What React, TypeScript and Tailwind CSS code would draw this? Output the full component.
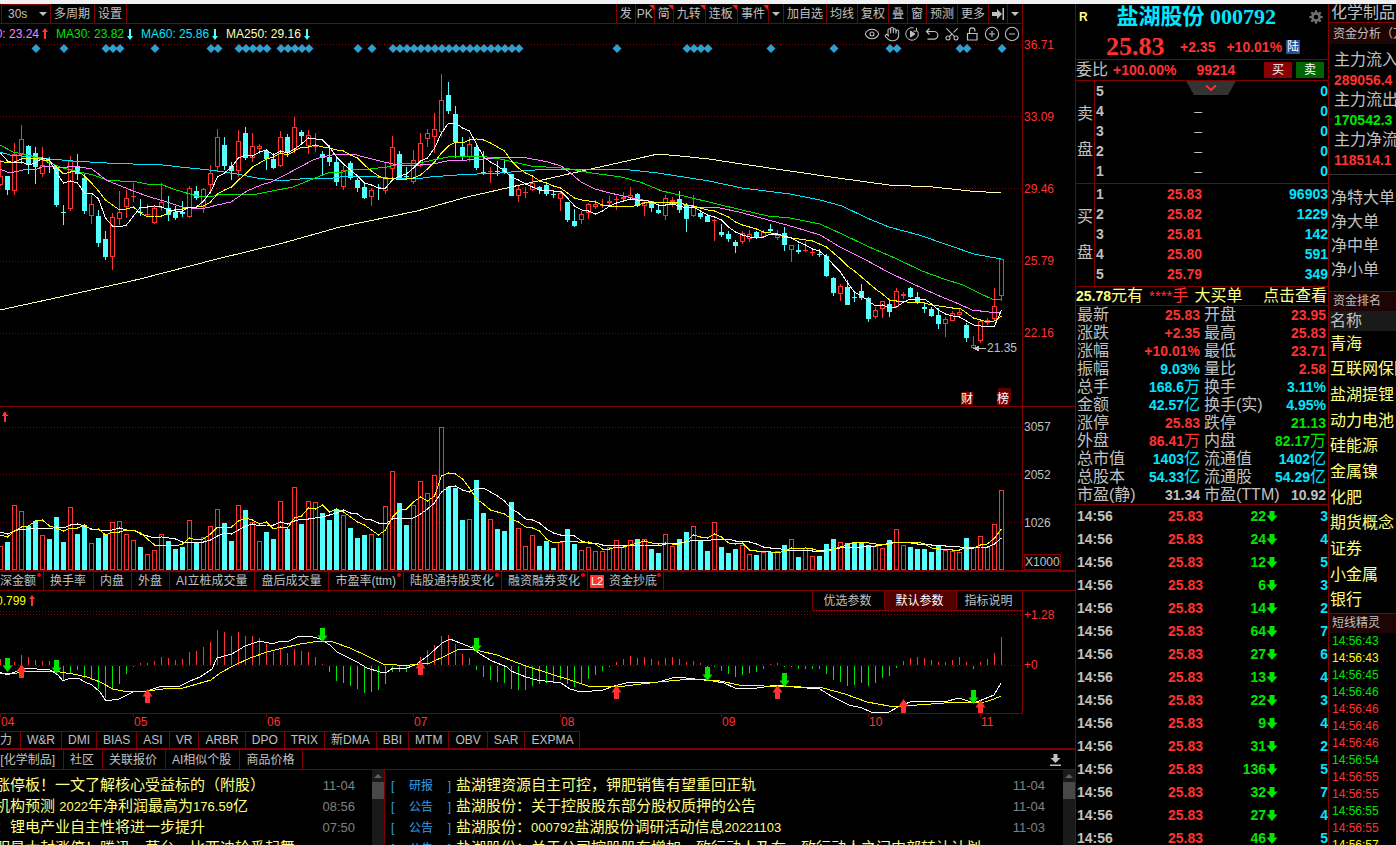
import type { ReactNode } from "react";
import { CircleMinus, CirclePlus, Eye, Hand, Scissors } from "lucide-react";

const RED = "#ff3232";
const CYAN = "#54ffff";
const GREEN = "#00e600";
const LINE = "#800000";

// high, body top, body bottom, low, rising
type Candle = [number, number, number, number, number];

const candles: Candle[] = [
  [160, 176, 185, 186, 1], [176, 176, 190, 195, 0], [143, 154, 191, 195, 1], [125, 139, 155, 164, 1],
  [145, 146, 165, 174, 0], [147, 153, 167, 184, 0], [147, 165, 174, 177, 1], [157, 162, 163, 173, 0],
  [166, 167, 205, 207, 0], [205, 212, 213, 225, 0], [156, 161, 209, 211, 1], [154, 166, 174, 180, 0],
  [173, 178, 211, 214, 0], [195, 204, 216, 224, 1], [210, 216, 243, 247, 0], [231, 239, 257, 260, 0],
  [213, 217, 257, 270, 1], [191, 212, 219, 225, 1], [190, 198, 207, 218, 1], [183, 196, 197, 202, 1],
  [199, 212, 213, 216, 0], [204, 214, 215, 217, 1], [206, 208, 223, 224, 1], [183, 202, 208, 211, 1],
  [196, 208, 215, 221, 0], [206, 212, 218, 220, 0], [201, 212, 214, 217, 0], [186, 188, 217, 218, 1],
  [186, 191, 198, 200, 0], [188, 189, 207, 213, 1], [165, 173, 185, 194, 1], [129, 137, 167, 171, 1],
  [137, 145, 166, 170, 0], [162, 166, 171, 180, 0], [130, 141, 171, 177, 1], [127, 133, 158, 160, 0],
  [133, 146, 158, 162, 1], [144, 146, 149, 154, 1], [150, 151, 159, 170, 0], [153, 159, 168, 169, 0],
  [131, 137, 166, 167, 1], [134, 137, 153, 157, 0], [117, 127, 150, 153, 1], [130, 132, 136, 143, 0],
  [130, 135, 146, 154, 1], [133, 146, 147, 152, 1], [151, 154, 158, 175, 0], [145, 157, 162, 166, 0],
  [157, 162, 182, 186, 0], [166, 170, 187, 190, 1], [161, 163, 178, 180, 0], [178, 180, 188, 192, 0],
  [182, 187, 198, 199, 0], [188, 190, 197, 206, 1], [184, 187, 188, 200, 0], [163, 177, 191, 194, 1],
  [136, 147, 169, 180, 1], [151, 154, 179, 180, 0], [167, 176, 177, 180, 0], [150, 160, 182, 184, 1],
  [133, 143, 166, 167, 1], [129, 133, 139, 147, 1], [113, 129, 137, 153, 1], [74, 100, 132, 137, 1],
  [82, 95, 111, 114, 0], [106, 114, 142, 158, 0], [137, 147, 156, 160, 0], [137, 144, 157, 162, 1],
  [143, 147, 168, 170, 0], [151, 172, 173, 175, 0], [167, 171, 172, 183, 1], [161, 171, 172, 176, 0],
  [161, 168, 173, 174, 0], [174, 174, 196, 196, 0], [186, 189, 196, 202, 1], [187, 192, 193, 198, 1],
  [177, 183, 190, 191, 1], [186, 187, 190, 194, 0], [183, 185, 194, 196, 0], [191, 194, 195, 198, 0],
  [192, 193, 199, 211, 1], [202, 202, 220, 222, 0], [209, 221, 226, 227, 0], [211, 214, 220, 224, 1],
  [203, 204, 213, 219, 1], [200, 204, 207, 209, 1], [199, 205, 206, 208, 1], [196, 201, 203, 205, 1],
  [196, 199, 200, 210, 1], [192, 197, 199, 202, 1], [187, 195, 198, 199, 1], [193, 194, 206, 207, 0],
  [201, 202, 206, 216, 1], [201, 202, 208, 212, 0], [206, 210, 213, 214, 0], [195, 198, 216, 220, 1],
  [197, 200, 202, 207, 1], [191, 199, 210, 213, 0], [203, 205, 219, 232, 0], [195, 207, 216, 217, 1],
  [210, 213, 217, 219, 0], [215, 216, 222, 222, 0], [219, 220, 221, 241, 1], [224, 232, 235, 237, 0],
  [231, 234, 239, 242, 0], [240, 242, 246, 253, 0], [231, 233, 242, 244, 1], [230, 234, 239, 242, 1],
  [231, 232, 238, 239, 0], [230, 232, 237, 238, 1], [224, 229, 231, 232, 0], [230, 235, 238, 240, 1],
  [227, 233, 245, 251, 0], [245, 245, 250, 262, 1], [244, 250, 252, 254, 0], [241, 250, 251, 252, 1],
  [249, 252, 253, 256, 1], [249, 254, 255, 257, 0], [254, 256, 276, 277, 0], [277, 278, 293, 296, 0],
  [284, 286, 294, 301, 1], [280, 287, 305, 305, 0], [292, 297, 298, 302, 0], [284, 291, 298, 300, 0],
  [297, 298, 319, 322, 0], [307, 310, 317, 319, 1], [301, 301, 309, 318, 1], [301, 304, 312, 317, 0],
  [288, 291, 307, 308, 1], [292, 294, 296, 299, 1], [287, 288, 297, 298, 0], [292, 297, 303, 304, 0],
  [302, 307, 309, 313, 0], [307, 309, 316, 317, 0], [308, 315, 324, 329, 0], [317, 319, 324, 337, 1],
  [311, 313, 321, 321, 1], [308, 312, 315, 315, 1], [323, 325, 338, 342, 0], [336, 345, 348, 349, 1],
  [320, 321, 341, 343, 1], [318, 320, 323, 325, 1], [288, 306, 319, 320, 1], [259, 259, 296, 301, 1],
];

const volumes = [
  24, 28, 65, 59, 44, 49, 35, 31, 53, 28, 63, 36, 45, 27, 32, 36, 48, 49, 36, 30, 23, 16, 20, 36, 29, 21, 23, 50,
  28, 33, 44, 61, 47, 29, 65, 60, 48, 29, 38, 31, 69, 41, 83, 46, 69, 68, 57, 50, 61, 55, 42, 32, 35, 36, 32, 64,
  99, 67, 45, 65, 89, 77, 95, 143, 83, 82, 50, 51, 90, 57, 51, 41, 39, 68, 42, 24, 35, 24, 29, 22, 28, 41, 26, 20,
  23, 19, 19, 23, 30, 23, 30, 31, 31, 21, 17, 36, 24, 31, 38, 44, 29, 19, 48, 23, 17, 21, 25, 16, 15, 18, 18, 19,
  25, 31, 13, 22, 14, 14, 26, 31, 28, 27, 27, 27, 25, 24, 22, 30, 41, 25, 23, 21, 21, 18, 24, 20, 19, 18, 32, 23,
  34, 23, 46, 80,
];

// pixels above (+) or below (-) the zero line
const histogram = [
  6, 3, 3, 10, 8, 5, 4, 4, 2, -15, -7, -4, -12, -14, -23, -32, -24, -18, -8, -1, 2, 2, 4, 8, 7, 5, 6, 13, 14, 18,
  23, 35, 33, 29, 33, 29, 29, 27, 21, 13, 17, 12, 16, 14, 13, 8, 1, -6, -15, -17, -20, -23, -27, -26, -24, -18,
  -6, -6, -6, 1, 8, 15, 20, 29, 30, 21, 11, 7, -4, -11, -14, -16, -17, -23, -24, -24, -20, -18, -17, -16, -14,
  -18, -21, -18, -13, -9, -5, -1, 3, 6, 9, 7, 8, 6, 4, 7, 8, 6, 3, 4, 2, -1, -1, -5, -8, -11, -9, -7, -6, -3, 1, 2,
  -1, -1, -3, -3, -3, -3, -8, -14, -16, -20, -19, -17, -20, -17, -12, -10, -2, 4, 7, 8, 7, 5, 3, 3, 5, 8, 3, -3,
  3, 6, 12, 28,
];

const diamonds = [
  5, 9, 15, 16, 17, 22, 30, 31, 34, 35, 36, 37, 38, 40, 41, 42, 43, 44, 51, 53, 56, 57, 58, 59, 60, 61, 62, 63, 64,
  65, 66, 67, 68, 69, 70, 71, 72, 73, 74, 88, 98, 99, 100, 101, 110, 119, 127, 128, 137, 138, 143,
];

const ma20 =
  "0,169 7,172 14,172 28,169 37,169 42,167 50,166 63,168 72,166 80,167 92,169 106,180 133,191 150,197 167,202 182,207 200,209 210,207 217,205 231,202 247,191 261,185 271,182 283,176 300,167 313,160 322,157 337,154 353,154 364,157 380,161 393,164 407,166 433,164 447,161 467,160 483,159 503,157 522,157 548,162 561,166 568,171 581,182 595,189 610,193 632,198 654,202 684,204 695,207 720,208 739,212 772,221 794,227 820,235 827,239 838,246 864,259 888,272 911,283 937,295 959,304 972,310 989,312 1001,312";
const ma30 =
  "0,145 13,152 28,155 35,157 43,159 50,163 63,168 80,172 93,175 107,180 120,181 137,182 147,184 163,185 173,189 183,192 197,196 210,197 218,195 232,194 240,195 257,194 267,192 293,187 310,180 328,173 343,172 353,169 370,169 387,167 400,164 420,163 433,160 453,156 480,156 500,159 531,166 561,168 570,169 592,173 621,177 640,182 662,191 684,196 717,204 742,210 768,216 790,218 820,224 842,234 867,246 897,259 922,271 944,279 963,285 981,294 992,299 1001,299";
const ma60 =
  "0,152 10,155 33,157 50,159 73,161 107,163 133,164 163,165 180,167 200,169 217,171 237,174 257,178 273,180 290,180 310,178 333,178 347,176 367,176 387,178 417,179 430,177 457,175 477,174 500,173 522,171 548,169 621,169 658,173 709,181 742,188 790,194 820,200 842,206 867,218 889,227 919,235 948,245 974,254 1001,259";
const ma250 =
  "0,310 60,297 140,279 217,259 283,243 340,227 417,211 467,197 520,185 573,173 658,154 680,156 709,159 742,164 838,178 889,185 933,187 970,191 1001,193";
const dif =
  "0,672 7,675 15,672 23,668 37,669 50,670 58,675 63,681 70,678 78,678 85,682 92,685 100,692 106,701 119,699 133,692 147,691 162,686 180,686 190,681 200,677 212,669 217,658 232,654 245,646 260,641 273,644 280,641 287,642 297,637 310,636 320,639 330,645 337,652 357,662 367,668 380,672 387,672 393,668 407,668 417,664 430,654 442,643 450,639 460,643 473,648 480,654 492,661 507,667 511,671 526,677 537,680 561,683 570,689 581,692 603,690 614,686 630,682 658,682 676,677 695,679 713,681 724,683 735,688 757,688 777,685 794,687 820,689 831,696 849,705 862,708 871,712 889,712 900,706 910,702 919,701 944,702 959,698 974,703 994,695 1001,683";
const dea =
  "0,674 17,673 27,671 53,671 73,674 87,677 100,682 113,689 123,691 147,691 163,689 183,688 197,684 211,680 220,673 233,666 250,658 267,652 283,648 300,644 320,641 333,642 350,648 367,656 383,664 397,665 410,665 430,663 447,655 457,650 467,649 480,651 497,655 510,660 526,666 573,681 588,686 606,687 625,686 658,682 691,679 720,681 739,685 764,686 801,687 823,688 845,694 867,702 889,706 904,706 944,703 985,702 994,699 1001,696";

const cx = (i: number) => i * 7 + 0.5;

function average(values: number[], seed: number[], size: number) {
  const all = [...seed, ...values];
  return values.map((_, i) => {
    const end = seed.length + i + 1;
    const part = all.slice(Math.max(0, end - size), end);
    return part.reduce((a, b) => a + b, 0) / part.length;
  });
}

const toPoints = (ys: number[]) => ys.map((y, i) => `${cx(i)},${Math.round(y)}`).join(" ");

const closes = candles.map(([, top, bottom, , up]) => (up ? top : bottom));
const closeSeed = [168, 168, 168, 168, 168, 150, 146, 145, 150];
const ma5 = toPoints(average(closes, closeSeed, 5));
const ma10 = toPoints(average(closes, closeSeed, 10));

const volumeSeed = [40, 40, 40, 40, 40, 38, 38, 38, 38];
const vol5 = toPoints(average(volumes, volumeSeed, 5).map((v) => 570 - v));
const vol10 = toPoints(average(volumes, volumeSeed, 10).map((v) => 570 - v));

function Trend({ points, color }: { points: string; color: string }) {
  return <polyline points={points} fill="none" stroke={color} />;
}

function GridLines({ ys }: { ys: number[] }) {
  return (
    <>
      {ys.map((y) => (
        <line key={y} x1="0" x2="1022" y1={y + 0.5} y2={y + 0.5} stroke={LINE} strokeDasharray="1 2" />
      ))}
    </>
  );
}

function PriceChart() {
  return (
    <svg className="block h-[362px] w-full" viewBox="0 44 1022 362" preserveAspectRatio="none" shapeRendering="crispEdges">
      <GridLines ys={[44, 116, 188, 261, 333]} />
      {diamonds.map((i) => (
        <path key={i} d={`M${cx(i) + 0.5} 44l4.5 4.5l-4.5 4.5l-4.5 -4.5z`} fill="#2f9fcf" shapeRendering="auto" />
      ))}
      {candles.map(([high, top, bottom, low, up], i) => {
        const color = up ? RED : CYAN;
        const x = cx(i);
        return (
          <g key={i} stroke={color}>
            {high < top && <line x1={x} x2={x} y1={high} y2={top} />}
            {low > bottom && <line x1={x} x2={x} y1={bottom} y2={low} />}
            {up && bottom - top > 1 ? (
              <rect x={x - 2} y={top + 0.5} width="4" height={bottom - top - 1} fill="black" />
            ) : (
              <rect x={x - 2.5} y={top} width="5" height={bottom - top} fill={color} stroke="none" />
            )}
          </g>
        );
      })}
      <Trend points={ma250} color="#ffffb4" />
      <Trend points={ma60} color="#00e6ff" />
      <Trend points={ma30} color={GREEN} />
      <Trend points={ma20} color="#ff80ff" />
      <Trend points={ma10} color="#ffff00" />
      <Trend points={ma5} color="#ffffff" />
      <path d="M974 348.5h12M974 348.5l4 -2v4z" stroke="#c0c0c0" fill="#c0c0c0" />
      <text x="987" y="352" fontSize="12" fill="#c0c0c0">21.35</text>
      <rect x="961" y="392" width="12" height="13" fill="#800000" />
      <text x="961" y="403" fontSize="12" fill="white">财</text>
      <rect x="998" y="388" width="13" height="14" fill="#600000" />
      <rect x="997" y="392" width="12" height="13" fill="#800000" />
      <text x="997" y="403" fontSize="12" fill="white">榜</text>
    </svg>
  );
}

function VolumeChart() {
  return (
    <svg className="block h-[163px] w-full" viewBox="0 407 1022 163" preserveAspectRatio="none" shapeRendering="crispEdges">
      <GridLines ys={[427, 474, 522]} />
      <path d="M4 422v-6h-2l3 -5l3 5h-2v6z" fill={RED} />
      {volumes.map((v, i) =>
        candles[i][4] ? (
          <rect key={i} x={cx(i) - 2} y={570.5 - v} width="4" height={v - 1} fill="black" stroke={RED} />
        ) : (
          <rect key={i} x={cx(i) - 2.5} y={570 - v} width="5" height={v} fill={CYAN} />
        )
      )}
      <Trend points={vol10} color="#ffffff" />
      <Trend points={vol5} color="#ffff00" />
    </svg>
  );
}

const sellMarks = [[7.5, 672], [56.5, 674], [322.5, 642], [476.5, 652], [707.5, 681], [784.5, 687], [973.5, 704]];
const buyMarks = [[21.5, 664], [147.5, 689], [420.5, 661], [616.5, 685], [777.5, 685], [903.5, 699], [980.5, 700]];

function MacdChart() {
  return (
    <svg className="block h-[102px] w-full" viewBox="0 611 1022 102" preserveAspectRatio="none" shapeRendering="crispEdges">
      <GridLines ys={[611, 614, 665]} />
      {histogram.map((v, i) => (
        <line key={i} x1={cx(i)} x2={cx(i)} y1={v > 0 ? 665 : 666} y2={(v > 0 ? 665 : 666) - v} stroke={v > 0 ? RED : GREEN} />
      ))}
      <Trend points={dif} color="#ffffff" />
      <Trend points={dea} color="#ffff00" />
      <g shapeRendering="auto">
        {sellMarks.map(([x, y]) => (
          <path key={x} d={`M${x} ${y}l-5 -6.5h2.5v-7.5h5v7.5h2.5z`} fill={GREEN} />
        ))}
        {buyMarks.map(([x, y]) => (
          <path key={x} d={`M${x} ${y}l-5 7.5h2.5v6.5h5v-6.5h2.5z`} fill={RED} />
        ))}
      </g>
    </svg>
  );
}

const months: [string, number][] = [["04", 0], ["05", 133], ["06", 266], ["07", 413], ["08", 560], ["09", 721], ["10", 868], ["11", 980]];

function MonthAxis() {
  return (
    <svg className="block h-[17px] w-full" viewBox="0 714 1022 17" preserveAspectRatio="none">
      {months.map(([name, x]) => (
        <g key={name}>
          <line x1={x + 0.5} x2={x + 0.5} y1="714" y2="717" stroke={LINE} />
          <text x={x + 1} y="726" fontSize="12" fill={RED}>{name}</text>
        </g>
      ))}
    </svg>
  );
}

function Caret() {
  return (
    <svg width="8" height="4" viewBox="0 0 8 4">
      <path d="M0 0h8l-4 4z" fill="#c0c0c0" />
    </svg>
  );
}

function TrendArrow({ up }: { up?: boolean }) {
  return (
    <svg className="shrink-0" width="6" height="12" viewBox="0 0 6 12">
      {up ? <path d="M3 0l3 4h-2v7h-2v-7h-2z" fill={RED} /> : <path d="M3 12l3 -4h-2v-7h-2v7h-2z" fill={CYAN} />}
    </svg>
  );
}

function HotCorner() {
  return (
    <svg className="absolute top-px right-0" width="5" height="5" viewBox="0 0 5 5">
      <path d="M0 0h5v5z" fill="#ff1414" />
    </svg>
  );
}

function ToolButton({ children, hot, wide, label }: { children: ReactNode; hot?: boolean; wide?: boolean; label?: string }) {
  return (
    <button
      aria-label={label}
      className={`relative flex h-full items-center justify-center border-l border-[#800000] whitespace-nowrap ${wide ? "pr-1 pl-[3px]" : "px-[3px]"}`}
    >
      {children}
      {hot && <HotCorner />}
    </button>
  );
}

function Toolbar() {
  return (
    <div className="flex h-5 items-stretch justify-between border-b border-[#800000] text-xs text-[#c0c0c0]">
      <div className="flex">
        <button className="ml-px flex w-[49px] items-center justify-between border-t border-l border-[#800000] pr-[3px] pl-1.5">
          30s <Caret />
        </button>
        <ToolButton wide>多周期</ToolButton>
        <div className="flex border-r border-[#800000]">
          <ToolButton wide>设置</ToolButton>
        </div>
      </div>
      <div className="flex">
        <ToolButton>发</ToolButton>
        <button className="relative flex w-[19px] items-center justify-center border-l border-[#800000]">
          PK
          <HotCorner />
        </button>
        <ToolButton hot>简</ToolButton>
        <ToolButton hot wide>九转</ToolButton>
        <ToolButton hot wide>连板</ToolButton>
        <ToolButton hot>事件</ToolButton>
        <ToolButton label="更多事件"><Caret /></ToolButton>
        <ToolButton>加自选</ToolButton>
        <ToolButton>均线</ToolButton>
        <ToolButton>复权</ToolButton>
        <ToolButton>叠</ToolButton>
        <ToolButton>窗</ToolButton>
        <ToolButton>预测</ToolButton>
        <ToolButton>更多</ToolButton>
        <ToolButton label="收起">
          <svg width="12" height="12" viewBox="0 0 12 12">
            <path d="M0 4h5V1l5 5l-5 5V8H0zM10.5 0h1.5v12h-1.5z" fill="#c0c0c0" />
          </svg>
        </ToolButton>
        <ToolButton label="菜单"><Caret /></ToolButton>
      </div>
    </div>
  );
}

function PlayIcon() {
  return (
    <svg width="14" height="14" viewBox="0 0 14 14" fill="none" stroke="#c0c0c0">
      <path d="M8.5 .8a6.3 6.3 0 1 0 4 3M11.5 .8v3.4h-3.2" />
      <path d="M5.5 4l4.5 3l-4.5 3z" fill="#c0c0c0" />
    </svg>
  );
}

function UndoIcon() {
  return (
    <svg width="14" height="14" viewBox="0 0 14 14" fill="none" stroke="#c0c0c0" strokeWidth="1.2">
      <path d="M4.5 1.5l-3 3l3 3M1.5 4.5h7.5a3.8 3.8 0 0 1 0 7.6h-6.5" />
    </svg>
  );
}

function UnlockIcon() {
  return (
    <svg width="14" height="14" viewBox="0 0 14 14" fill="none" stroke="#c0c0c0" strokeWidth="1.2">
      <path d="M2.5 6.5h9.5v6.5h-9.5zM4.5 6.5v-3a2.7 2.7 0 0 1 5.4 0v1" />
    </svg>
  );
}

function GearIcon() {
  return (
    <svg width="14" height="14" viewBox="0 0 14 14" fill="none" stroke="#707070">
      <circle cx="7" cy="7" r="3.6" strokeWidth="2.6" />
      <path
        d="M7 .3v3M7 10.7v3M.3 7h3M10.7 7h3M2.3 2.3l2 2M9.7 9.7l2 2M2.3 11.7l2 -2M9.7 4.3l2 -2"
        strokeWidth="2.2"
      />
    </svg>
  );
}

function Averages() {
  const item = "flex items-center gap-[3px]";
  const icon = { size: 16, strokeWidth: 1.6 };
  const tools: [string, ReactNode][] = [
    ["显示", <Eye {...icon} />], ["拖动", <Hand {...icon} />], ["回放", <PlayIcon />], ["撤销", <UndoIcon />],
    ["剪切", <Scissors className="-rotate-90" {...icon} />], ["锁定", <UnlockIcon />], ["放大", <CirclePlus {...icon} />],
    ["缩小", <CircleMinus {...icon} />],
  ];
  return (
    <div className="flex h-5 items-center justify-between text-xs">
      <div className="flex gap-2 whitespace-nowrap">
        <div className="flex w-12 items-center justify-end gap-[3px] overflow-hidden text-[#ff80ff]">MA20: 23.24<TrendArrow up /></div>
        <div className={`${item} text-[#00e600]`}>MA30: 23.82<TrendArrow /></div>
        <div className={`${item} text-[#00e6ff]`}>MA60: 25.86<TrendArrow /></div>
        <div className={`${item} text-[#ffffb4]`}>MA250: 29.16<TrendArrow /></div>
      </div>
      <div className="flex text-[#c0c0c0]">
        {tools.map(([label, node]) => (
          <button key={label} aria-label={label} className="flex size-5 items-center justify-center">{node}</button>
        ))}
      </div>
    </div>
  );
}

function Dot() {
  return <span className="absolute top-px right-0.5 size-1 rounded-full bg-red-600" />;
}

function Tab({ children, dot }: { children: ReactNode; dot?: boolean }) {
  return (
    <button className="relative flex items-center border-r border-[#800000] pr-[7px] pl-1.5 whitespace-nowrap">
      {children}
      {dot && <Dot />}
    </button>
  );
}

const indicators = ["W&R", "DMI", "BIAS", "ASI", "VR", "ARBR", "DPO", "TRIX", "新DMA", "BBI", "MTM", "OBV", "SAR", "EXPMA"];

function Scrollbar() {
  return (
    <div className="flex w-3 shrink-0 flex-col items-center bg-[#1a1a1a]">
      <svg className="mt-1 mb-1" width="8" height="4" viewBox="0 0 8 4">
        <path d="M0 4h8l-4 -4z" fill="#606060" />
      </svg>
      <div className="h-[17px] w-full bg-[#484848]" />
    </div>
  );
}

function Num({ children }: { children: ReactNode }) {
  return <span className="text-[13px]">{children}</span>;
}

const leftNews: [ReactNode, string][] = [
  ["涨停板！一文了解核心受益标的（附股）", "11-04"],
  [<>机构预测 <Num>2022</Num>年净利润最高为<Num>176.59</Num>亿</>, "08:56"],
  ["：锂电产业自主性将进一步提升", "07:50"],
  ["明星大封涨停！腾讯、茅台、比亚迪轮番起舞", ""],
];

const rightNews: [string, ReactNode, string][] = [
  ["研报", "盐湖锂资源自主可控，钾肥销售有望重回正轨", "11-04"],
  ["公告", "盐湖股份：关于控股股东部分股权质押的公告", "11-04"],
  ["公告", <>盐湖股份：<Num>000792</Num>盐湖股份调研活动信息<Num>20221103</Num></>, "11-03"],
  ["公告", "盐湖股份：关于公司控股股东增加一致行动人及在一致行动人之间内部转让计划", ""],
];

function News() {
  return (
    <div className="flex min-h-0 flex-1 overflow-hidden text-[15px] whitespace-nowrap text-[#ffff80]">
      <div className="flex w-[385px] shrink-0 border-r border-[#800000]">
        <ul className="min-w-0 flex-1 overflow-hidden pt-[5px]">
          {leftNews.map(([title, time], i) => (
            <li key={i} className="flex h-[21px] items-center justify-between pr-[17px]">
              <a href="#" className="-ml-[5px]">{title}</a>
              <time className="text-[13px] text-[#808080]">{time}</time>
            </li>
          ))}
        </ul>
        <Scrollbar />
      </div>
      <ul className="min-w-0 flex-1 overflow-hidden pt-[5px] pl-1.5">
        {rightNews.map(([kind, title, time], i) => (
          <li key={i} className="flex h-[21px] items-center pr-[18px]">
            <span className="flex w-[60px] shrink-0 items-center justify-between text-xs text-[#32a0e6]">
              <span>[</span>{kind}<span>]</span>
            </span>
            <a href="#" className="ml-[5px] flex-1">{title}</a>
            <time className="text-[13px] text-[#808080]">{time}</time>
          </li>
        ))}
      </ul>
      <Scrollbar />
    </div>
  );
}

function ChartSide() {
  return (
    <main className="flex min-w-0 flex-1 flex-col">
      <section className="flex border-b border-[#800000]">
        <div className="min-w-0 flex-1 border-r border-[#800000]">
          <Toolbar />
          <Averages />
          <PriceChart />
        </div>
        <div className="flex w-[52px] flex-col pt-[33px] pl-px text-xs leading-4 text-[#ff3232]">
          {["36.71", "33.09", "29.46", "25.79", "22.16"].map((p) => (
            <span key={p} className="h-18">{p}</span>
          ))}
        </div>
      </section>

      <section className="flex border-b-2 border-[#800000]">
        <div className="min-w-0 flex-1 border-r border-[#800000]">
          <VolumeChart />
        </div>
        <div className="flex w-[52px] flex-col pt-3 pl-px text-xs leading-4 text-[#c0c0c0]">
          <span className="h-12">3057</span>
          <span className="h-12">2052</span>
          <span>1026</span>
          <span className="mt-auto w-[37px] border border-[#800000] leading-[14px]">X1000</span>
        </div>
      </section>

      <nav className="flex h-[19px] items-stretch border-b border-[#800000] text-xs text-[#c0c0c0]">
        <button className="relative flex w-11 items-center justify-end overflow-hidden border-r border-[#800000] pr-[7px] whitespace-nowrap">
          沪深金额
          <Dot />
        </button>
        <Tab>换手率</Tab>
        <Tab>内盘</Tab>
        <Tab>外盘</Tab>
        <Tab>AI立桩成交量</Tab>
        <Tab>盘后成交量</Tab>
        <Tab dot>市盈率(ttm)</Tab>
        <Tab dot>陆股通持股变化</Tab>
        <Tab dot>融资融券变化</Tab>
        <button className="relative flex items-center gap-[5px] border-r border-[#800000] pr-1.5 pl-0.5 whitespace-nowrap">
          <span className="w-3.5 bg-[#ff3232] text-center text-[11px] leading-[13px] text-white">L2</span>
          资金抄底
          <Dot />
        </button>
      </nav>

      <section className="flex">
        <div className="min-w-0 flex-1 border-r border-b border-[#800000] text-xs">
          <div className="flex h-5 justify-between">
            <div className="flex w-[35px] items-center justify-end gap-[3px] overflow-hidden text-[#ffff00]">
              0.799<TrendArrow up />
            </div>
            <div className="flex text-[#c0c0c0]">
              <button className="w-18 border-b border-l border-[#800000] pr-0.5">优选参数</button>
              <button className="w-18 border-b border-l border-[#800000] bg-[#500000] pr-0.5 text-white">默认参数</button>
              <button className="w-[66px] border-b border-l border-[#800000] pr-0.5">指标说明</button>
            </div>
          </div>
          <MacdChart />
        </div>
        <div className="flex w-[52px] flex-col pt-4 pl-px text-xs leading-4 text-[#ff3232]">
          <span className="h-[50px]">+1.28</span>
          <span>+0</span>
        </div>
      </section>
      <div className="pr-[53px]">
        <MonthAxis />
      </div>

      <nav className="flex h-[19px] items-stretch border-b-2 border-[#800000] text-xs text-[#c0c0c0]">
        <button className="flex w-[21px] items-center border-t border-r border-[#800000]">力</button>
        <div className="flex border-t border-[#800000]">
          {indicators.map((name) => (
            <button key={name} className="flex items-center border-r border-[#800000] px-1.5 whitespace-nowrap">{name}</button>
          ))}
        </div>
      </nav>

      <nav className="flex h-5 items-stretch border-b border-[#800000] text-xs text-[#c0c0c0]">
        <button className="flex w-16 items-center justify-end border-r border-[#800000] pr-2 whitespace-nowrap">[化学制品]</button>
        {["社区", "关联报价", "AI相似个股", "商品价格"].map((name) => (
          <button key={name} className="flex items-center border-r border-[#800000] pr-2 pl-1.5 whitespace-nowrap">{name}</button>
        ))}
        <button aria-label="收起资讯" className="mr-3.5 ml-auto">
          <svg width="11" height="12" viewBox="0 0 11 12">
            <path d="M3.5 0h4v4h3l-5 5l-5 -5h3zM0 10.5h11v1.5h-11z" fill="#c0c0c0" />
          </svg>
        </button>
      </nav>

      <News />
    </main>
  );
}

type Level = [string, string, string];

const asks: Level[] = [["5", "", "0"], ["4", "–", "0"], ["3", "–", "0"], ["2", "–", "0"], ["1", "–", "0"]];
const bids: Level[] = [
  ["1", "25.83", "96903"], ["2", "25.82", "1229"], ["3", "25.81", "142"], ["4", "25.80", "591"], ["5", "25.79", "349"],
];

function Book({ side, rows }: { side: string; rows: Level[] }) {
  return (
    <div className="flex border-b border-[#800000]">
      <div className="flex w-[19px] flex-col items-center justify-center gap-3 border-r border-[#800000] text-base text-[#c0c0c0]">
        <span>{side}</span>
        <span>盘</span>
      </div>
      <table className="mb-0.5 flex-1 table-fixed text-sm font-bold">
        <tbody>
          {rows.map(([n, price, amount]) => (
            <tr key={n} className="h-5">
              <td className="w-10 p-0 pl-px leading-5 text-[#c0c0c0]">{n}</td>
              <td className={`w-[67px] p-0 text-right leading-5 ${price === "–" ? "font-normal text-[#c0c0c0]" : "text-[#ff3232]"}`}>{price}</td>
              <td className="p-0 text-right leading-5 text-[#00e6ff]">{amount}</td>
            </tr>
          ))}
        </tbody>
      </table>
    </div>
  );
}

const tones = { r: "text-[#ff3232]", c: "text-[#00e6ff]", g: "text-[#00e600]", n: "text-[#c0c0c0]" };
type Tone = keyof typeof tones;

const stats: [string, string, Tone, string, string, Tone][] = [
  ["最新", "25.83", "r", "开盘", "23.95", "r"],
  ["涨跌", "+2.35", "r", "最高", "25.83", "r"],
  ["涨幅", "+10.01%", "r", "最低", "23.71", "r"],
  ["振幅", "9.03%", "c", "量比", "2.58", "r"],
  ["总手", "168.6万", "c", "换手", "3.11%", "c"],
  ["金额", "42.57亿", "c", "换手(实)", "4.95%", "c"],
  ["涨停", "25.83", "r", "跌停", "21.13", "g"],
  ["外盘", "86.41万", "r", "内盘", "82.17万", "g"],
  ["总市值", "1403亿", "c", "流通值", "1402亿", "c"],
  ["总股本", "54.33亿", "c", "流通股", "54.29亿", "c"],
  ["市盈(静)", "31.34", "n", "市盈(TTM)", "10.92", "n"],
];

function StatValue({ value, tone }: { value: string; tone: Tone }) {
  const unit = /[万亿]$/.test(value) ? value.slice(-1) : "";
  return (
    <td className={`p-0 text-right text-sm leading-[18px] font-bold ${tones[tone]}`}>
      {unit ? value.slice(0, -1) : value}
      {unit && <span className="text-base leading-[18px] font-normal">{unit}</span>}
    </td>
  );
}

const ticks = [
  [22, 3], [24, 4], [12, 5], [6, 3], [14, 2], [64, 7], [27, 6], [13, 4], [22, 3], [9, 4], [31, 2], [136, 5], [32, 7], [27, 4], [46, 5],
];

function Quote() {
  return (
    <section className="flex w-[254px] shrink-0 flex-col overflow-hidden border-x border-[#800000] whitespace-nowrap">
      <header className="h-14 border-b border-[#800000]">
        <div className="flex h-[26px] items-center pr-[5px] pl-[3px]">
          <span className="text-xs font-bold text-[#ffff80]">R</span>
          <h1 className="flex-1 pr-1 text-center font-['Liberation_Serif','Noto_Sans_CJK_SC',serif] text-[22px] leading-none font-bold text-[#00e6ff]">
            盐湖股份 000792
          </h1>
          <button aria-label="设置">
            <GearIcon />
          </button>
        </div>
        <div className="flex h-[29px] items-center pt-1 pl-[30px] text-sm font-bold text-[#ff3232]">
          <span className="w-[63px] font-['Liberation_Serif',serif] text-[26px] leading-none">25.83</span>
          <span className="ml-[11px]">+2.35</span>
          <span className="ml-[11px]">+10.01%</span>
          <span className="ml-1 bg-[#2850a0] px-px text-xs leading-[14px] font-normal text-white">陆</span>
        </div>
      </header>

      <div className="flex h-[21px] items-center border-b border-[#800000] pr-1 text-sm font-bold text-[#ff3232]">
        <span className="text-base leading-none font-normal text-[#c0c0c0]">委比</span>
        <span className="ml-[5px]">+100.00%</span>
        <span className="ml-5">99214</span>
        <button className="ml-auto h-4 w-7 bg-[#8b0000] text-xs leading-4 font-normal text-white">买</button>
        <button className="ml-1 h-4 w-7 bg-[#006400] text-xs leading-4 font-normal text-white">卖</button>
      </div>

      <div className="relative">
        <Book side="卖" rows={asks} />
        <button aria-label="展开" className="absolute top-0 left-[110px]">
          <svg width="50" height="14" viewBox="0 0 50 14">
            <path d="M0 0h50l-8 14h-34z" fill="#333" />
            <path d="M20 4.500l5 4.500l5 -4.500" fill="none" stroke={RED} strokeWidth="2" />
          </svg>
        </button>
      </div>
      <Book side="买" rows={bids} />

      <a href="#" className="flex h-[19px] shrink-0 items-center border-b border-[#800000] text-base leading-none text-[#ffff80]">
        <b className="text-sm leading-none">25.78</b>元有
        <span className="ml-1.5 text-[#ff3232]"><span className="text-[15px]">****</span>手</span>
        <span className="ml-1.5">大买单</span>
        <span className="ml-auto pr-px">点击查看</span>
      </a>

      <div className="border-b border-[#800000] pr-0.5 pl-px">
        <table className="w-full table-fixed text-base text-[#c0c0c0]">
          <colgroup>
            <col className="w-14" />
            <col className="w-[67px]" />
            <col className="w-[70px]" />
            <col />
          </colgroup>
          <tbody>
            {stats.map(([a, av, at, b, bv, bt]) => (
              <tr key={a} className="h-[18px]">
                <th className="p-0 text-left leading-[18px] font-normal">{a}</th>
                <StatValue value={av} tone={at} />
                <th className="p-0 pl-1 text-left leading-[18px] font-normal">{b}</th>
                <StatValue value={bv} tone={bt} />
              </tr>
            ))}
          </tbody>
        </table>
      </div>

      <table className="w-full table-fixed text-sm font-bold">
        <tbody>
          {ticks.map(([amount, count], i) => (
            <tr key={i} className="h-[23px]">
              <td className="w-14 p-0 pl-px leading-[23px] text-[#c0c0c0]">14:56</td>
              <td className="w-[71px] p-0 text-right leading-[23px] text-[#ff3232]">25.83</td>
              <td className="w-[75px] p-0 leading-[23px] text-[#00e600]">
                <span className="flex items-center justify-end">
                  {amount}
                  <svg width="12" height="11" viewBox="0 0 12 11">
                    <path d="M3.5 0h5v4.5h3l-5.5 6.5l-5.5 -6.5h3z" fill={GREEN} />
                  </svg>
                </span>
              </td>
              <td className="p-0 text-right leading-[23px] text-[#00e6ff]">{count}</td>
            </tr>
          ))}
        </tbody>
      </table>
    </section>
  );
}

const flows: [string, string, Tone][] = [["主力流入", "289056.4", "r"], ["主力流出", "170542.3", "g"], ["主力净流", "118514.1", "r"]];
const sectors = ["青海", "互联网保险", "盐湖提锂", "动力电池", "硅能源", "金属镍", "化肥", "期货概念", "证券", "小金属", "银行"];
const alerts: [string, string][] = [
  ["14:56:43", "text-[#00e600]"], ["14:56:43", "text-[#ffff00]"], ["14:56:45", "text-[#00e600]"], ["14:56:46", "text-[#00e600]"],
  ["14:56:46", "text-[#ff3232]"], ["14:56:46", "text-[#ff3232]"], ["14:56:46", "text-[#ff3232]"], ["14:56:54", "text-[#00e600]"],
  ["14:56:55", "text-[#ff3232]"], ["14:56:55", "text-[#ff3232]"], ["14:56:55", "text-[#00e600]"], ["14:56:55", "text-[#ff3232]"],
  ["14:56:57", "text-[#ffff00]"],
];

function Sidebar() {
  return (
    <aside className="w-[67px] shrink-0 overflow-hidden text-base whitespace-nowrap text-[#c0c0c0]">
      <h2 className="h-[19px] border-b border-[#800000] pl-0.5 leading-[18px]">化学制品</h2>
      <h3 className="mt-px h-5 bg-[#1e0505] pl-1 text-xs leading-5">资金分析（万）</h3>
      <div className="border-b border-[#333] pt-1.5 pb-1 pl-[5px]">
        {flows.map(([name, value, tone]) => (
          <div key={name}>
            <div className="leading-5">{name}</div>
            <div className={`text-sm leading-5 font-bold ${tones[tone]}`}>{value}</div>
          </div>
        ))}
      </div>
      <div className="border-b border-[#800000] pt-[11px] pb-[9px] pl-0.5 leading-6">
        {["净特大单", "净大单", "净中单", "净小单"].map((name) => (
          <div key={name}>{name}</div>
        ))}
      </div>
      <h3 className="h-[19px] bg-[#1e0505] pl-1 text-xs leading-[18px]">资金排名</h3>
      <div className="h-5 bg-[#1a1a1a] pl-px leading-5">名称</div>
      <ul className="flex h-[282px] flex-col text-[#ffff80]">
        {sectors.map((name) => (
          <li key={name} className="flex flex-1 items-center pl-px">
            <a href="#" className="leading-5">{name}</a>
          </li>
        ))}
      </ul>
      <h3 className="h-5 border-t border-[#800000] bg-[#1e0505] pl-[3px] text-xs leading-[18px]">短线精灵</h3>
      <ul className="pl-[3px] text-xs leading-[17px]">
        {alerts.map(([time, tone], i) => (
          <li key={i} className={tone}>{time}</li>
        ))}
      </ul>
    </aside>
  );
}

export default function App() {
  return (
    <div className="flex h-screen flex-col overflow-hidden bg-black font-['Liberation_Sans','Noto_Sans_CJK_SC',sans-serif]">
      <div className="h-1 shrink-0 bg-[#f0f0f0]" />
      <div className="flex min-h-0 flex-1">
        <ChartSide />
        <Quote />
        <Sidebar />
      </div>
    </div>
  );
}
